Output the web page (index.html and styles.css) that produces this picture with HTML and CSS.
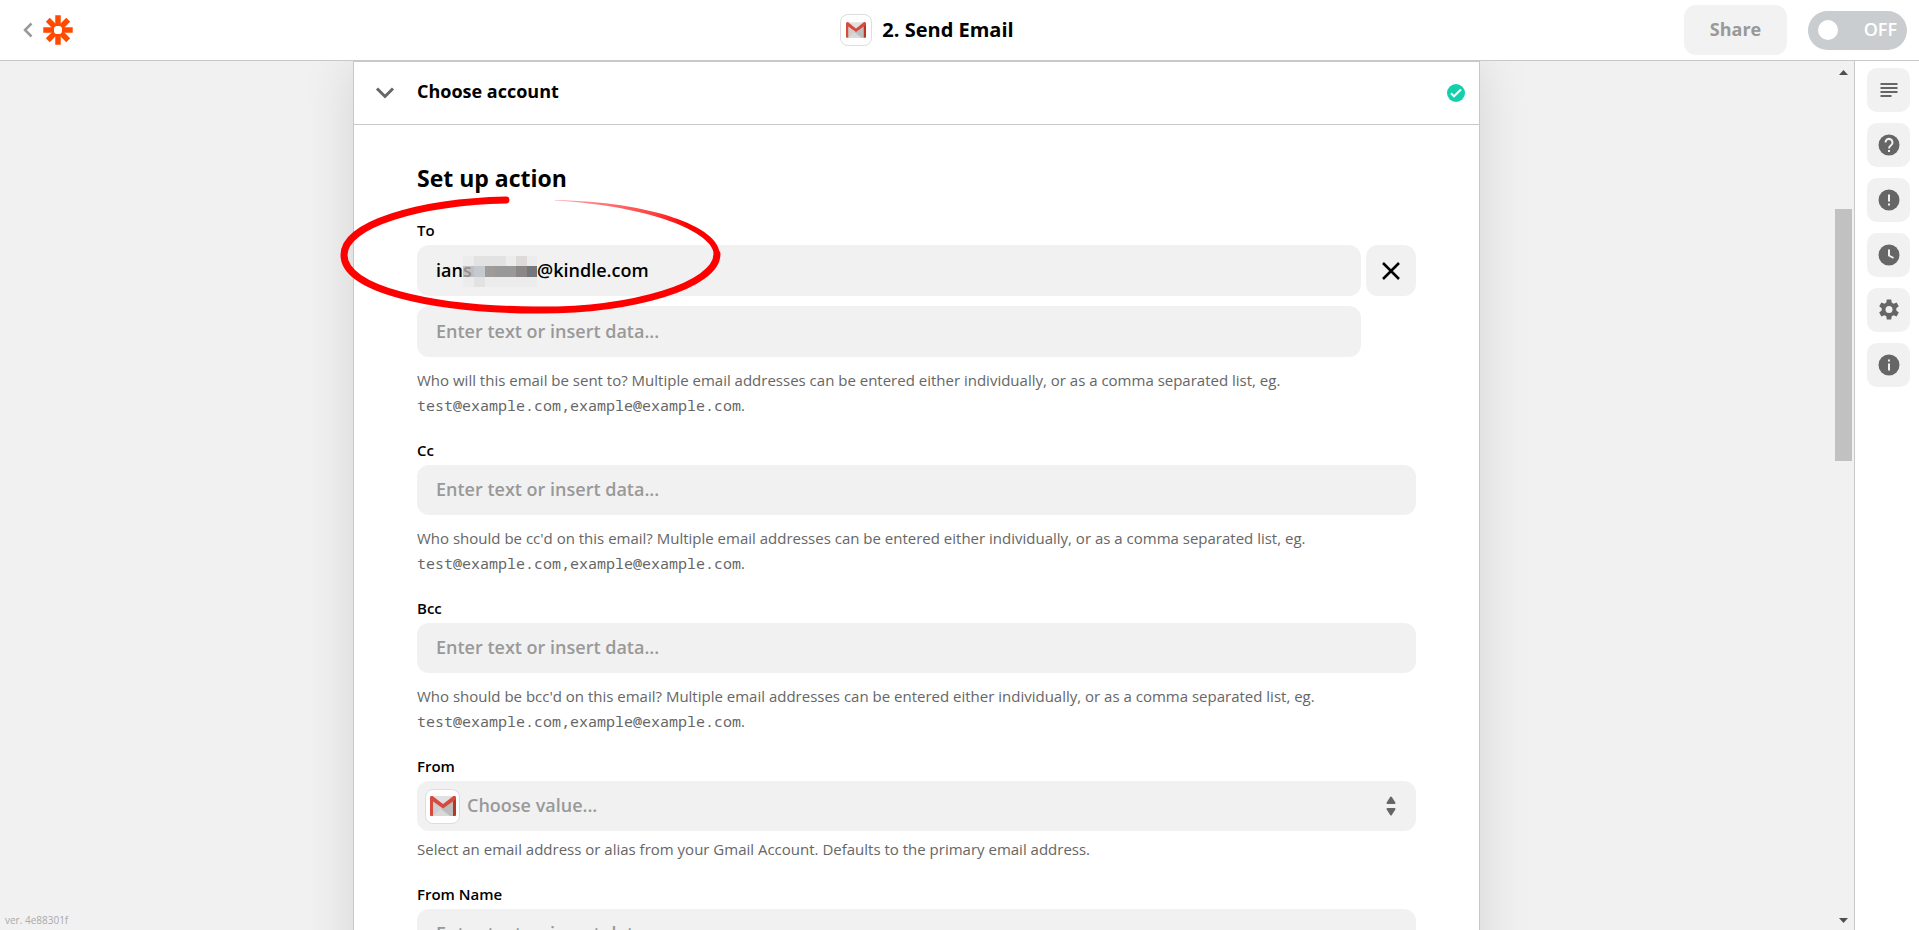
FILE: index.html
```html
<!DOCTYPE html>
<html lang="en">
<head>
  <meta charset="UTF-8">
  <meta name="viewport" content="width=device-width, initial-scale=1.0">
  <title>Send Email</title>
  <link rel="stylesheet" href="styles.css">
</head>
<body>
  <!-- shared icon shapes -->
  <svg class="sprite" aria-hidden="true">
    <symbol id="gmail" viewBox="0 0 26 20">
      <path fill="#e1e1e1" d="M2 0h22v20H2z"/>
      <path fill="#cfcfcf" d="M3 3l10 9L3 20z"/>
      <path fill="#d9d9d9" d="M3 20l10-9 8 9z"/>
      <path fill="#bdbdbd" d="M23 4l-10 8-2 1 9 7h3z"/>
      <path fill="#d54b3d" d="M0 2a2 2 0 0 1 2-2h1v20H1a1 1 0 0 1-1-1z"/>
      <path fill="#b63524" d="M26 2a2 2 0 0 0-2-2h-1v20h2a1 1 0 0 0 1-1z"/>
      <path fill="#d54b3d" d="M0 2C0 0 2-.5 3.200.4L13 8 22.800.4C24-.5 26 0 26 2c0 1-.4 1.600-1 2L13 12.500 1 4C.4 3.600 0 3 0 2z"/>
    </symbol>
  </svg>

  <header class="topbar">
    <div class="topbar-left">
      <a href="#" class="back" aria-label="Back">
        <svg width="10" height="16" viewBox="0 0 10 16"><path d="M8.500 1.500L2 8l6.500 6.500" fill="none" stroke="#999" stroke-width="2.500"/></svg>
      </a>
      <a href="#" class="logo" aria-label="Zapier">
        <svg width="30" height="30" viewBox="-15 -15 30 30">
          <g stroke="#ff4a00" stroke-width="5.500" stroke-linecap="butt">
            <path d="M0-14.700V-4M0 4v10.700M-14.700 0H-4M4 0h10.700"/>
            <path d="M-10.200-10.200L-3-3M10.200 10.200L3 3M-10.200 10.200L-3 3M10.200-10.200L3-3"/>
          </g>
          <rect x="-3.500" y="-3.500" width="7" height="7" rx="1.500" fill="#fff"/>
        </svg>
      </a>
    </div>
    <div class="topbar-title">
      <span class="app-icon"><svg width="20" height="16"><use href="#gmail"/></svg></span>
      <h1>2. Send Email</h1>
    </div>
    <div class="topbar-actions">
      <button type="button" class="share">Share</button>
      <label class="toggle">
        <input type="checkbox" aria-label="Turn on Zap">
        <span>OFF</span>
      </label>
    </div>
  </header>

  <div class="workspace">
    <main class="canvas">
      <section class="card">
        <button type="button" class="step">
          <svg width="20" height="14" viewBox="0 0 20 14"><path d="M2 2.500l8 8 8-8" fill="none" stroke="#666" stroke-width="3"/></svg>
          <span>Choose account</span>
          <svg class="check" width="18" height="18" viewBox="0 0 18 18"><circle cx="9" cy="9" r="9" fill="#13d0ac"/><path d="M4 9.300l3 3L14 5.500" fill="none" stroke="#fff" stroke-width="2"/></svg>
        </button>

        <form class="form">
          <h2>Set up action</h2>

          <div class="field field-to">
            <label for="to">To</label>
            <div class="multi">
              <div class="entry">
                <input type="text" id="to" value="ians&nbsp;&nbsp;&nbsp;&nbsp;&nbsp;&nbsp;&nbsp;&nbsp;&nbsp;&nbsp;&nbsp;&nbsp;&nbsp;&nbsp;@kindle.com">
                <svg class="mosaic" width="74" height="31" viewBox="0 0 74 31" shape-rendering="crispEdges">
                  <path fill="#ececec" d="M0 0h74v10H0zM0 21h74v10H0z"/>
                  <path fill="#e2e2e2" d="M11 0h11v10H11zM22 0h21v10H22zM11 21h11v10H11z"/>
                  <path fill="#dedada" d="M53 0h11v10H53z"/>
                  <path fill="#b5b3b3" fill-opacity=".8" d="M0 10h11v11H0z"/>
                  <path fill="#c5c9d1" d="M11 10h11v11H11z"/>
                  <path fill="#a09a98" d="M22 10h10v11H22z"/>
                  <path fill="#999" d="M32 10h21v11H32z"/>
                  <path fill="#8b8786" d="M53 10h11v11H53z"/>
                  <path fill="#75787b" d="M64 10h10v11H64z"/>
                </svg>
              </div>
              <button type="button" class="remove" aria-label="Remove">
                <svg width="18" height="18" viewBox="0 0 18 18"><path d="M1 1l16 16M17 1L1 17" stroke="#000" stroke-width="2.500"/></svg>
              </button>
              <input type="text" aria-label="Another recipient" placeholder="Enter text or insert data...">
            </div>
            <p>Who will this email be sent to? Multiple email addresses can be entered either individually, or as a comma separated list, eg. <code>test@example.com,example@example.com</code>.</p>
            <svg class="circle-mark" width="390" height="126" viewBox="0 0 390 126" aria-hidden="true">
              <defs>
                <linearGradient id="fade" x1="0" x2="1"><stop offset="0" stop-color="#f00" stop-opacity=".35"/><stop offset=".6" stop-color="#f00" stop-opacity=".75"/><stop offset=".8" stop-color="#f00"/></linearGradient>
              </defs>
              <path d="M166 10C80 12 4 34 4 65C4 99 90 119 194 120C294 121 377 95 377 64" fill="none" stroke="#f00" stroke-width="7" stroke-linecap="round"/>
              <path d="M374 65C374 42 310 16 215 10.500V10C310 12 380 36 380 65z" fill="url(#fade)"/>
            </svg>
          </div>

          <div class="field">
            <label for="cc">Cc</label>
            <input type="text" id="cc" placeholder="Enter text or insert data...">
            <p>Who should be cc'd on this email? Multiple email addresses can be entered either individually, or as a comma separated list, eg. <code>test@example.com,example@example.com</code>.</p>
          </div>

          <div class="field">
            <label for="bcc">Bcc</label>
            <input type="text" id="bcc" placeholder="Enter text or insert data...">
            <p>Who should be bcc'd on this email? Multiple email addresses can be entered either individually, or as a comma separated list, eg. <code>test@example.com,example@example.com</code>.</p>
          </div>

          <div class="field field-from">
            <label for="from">From</label>
            <div class="select">
              <span class="app-icon"><svg width="26" height="20"><use href="#gmail"/></svg></span>
              <select id="from"><option>Choose value...</option></select>
              <svg width="10" height="20" viewBox="0 0 10 20"><path d="M5 1.500l3.500 5.500h-7zM5 18.500L1.500 13h7z" fill="#666" stroke="#666" stroke-width="2" stroke-linejoin="round"/></svg>
            </div>
            <p>Select an email address or alias from your Gmail Account. Defaults to the primary email address.</p>
          </div>

          <div class="field">
            <label for="fromName">From Name</label>
            <input type="text" id="fromName" placeholder="Enter text or insert data...">
          </div>
        </form>
      </section>
      <div class="version">ver. 4e88301f</div>
    </main>

    <div class="scrollbar" aria-hidden="true">
      <svg width="9" height="5" viewBox="0 0 9 5"><path d="M0 5L4.500 0 9 5z" fill="#505050"/></svg>
      <div class="track"><div class="thumb"></div></div>
      <svg width="9" height="5" viewBox="0 0 9 5"><path d="M0 0h9L4.500 5z" fill="#505050"/></svg>
    </div>

    <nav class="sidebar">
      <button type="button" aria-label="Outline"><svg viewBox="0 0 24 24"><path d="M3.500 5h17v2h-17zM3.500 9h17v2h-17zM3.500 13h17v2h-17zM3.500 17h11v2h-11z"/></svg></button>
      <button type="button" aria-label="Help"><svg viewBox="0 0 24 24"><circle cx="12" cy="12" r="10.500"/><path class="line" d="M8.500 9.500a3.500 3.500 0 1 1 5.600 2.700c-1.200.9-2.100 1.500-2.100 3.300"/><path class="cut" d="M11 17h2v2h-2z"/></svg></button>
      <button type="button" aria-label="Alerts"><svg viewBox="0 0 24 24"><circle cx="12" cy="12" r="10.500"/><path class="cut" d="M11 6.500h2v7h-2zM11 15.500h2v2h-2z"/></svg></button>
      <button type="button" aria-label="History"><svg viewBox="0 0 24 24"><circle cx="12" cy="12" r="10.500"/><path class="line" d="M12 6.500v6l4.500 2.500"/></svg></button>
      <button type="button" aria-label="Settings"><svg viewBox="0 0 24 24"><path d="M9.800 1.500h4.400l.5 3.100 1.900 1.100 3-1.200 2.200 3.800-2.500 2v2.300l2.500 2-2.200 3.800-3-1.200-1.900 1.100-.5 3.200H9.800l-.5-3.200-1.900-1.100-3 1.200-2.200-3.800 2.500-2v-2.300l-2.500-2 2.200-3.800 3 1.200 1.900-1.100z"/><circle class="cut" cx="12" cy="11.500" r="3.500"/></svg></button>
      <button type="button" aria-label="Info"><svg viewBox="0 0 24 24"><circle cx="12" cy="12" r="10.500"/><path class="cut" d="M11 6.500h2v2h-2zM11 10.500h2v7h-2z"/></svg></button>
    </nav>
  </div>
</body>
</html>
```

FILE: styles.css
```css
* {
  box-sizing: border-box;
}
body {
  margin: 0;
  height: 100vh;
  display: flex;
  flex-direction: column;
  overflow: hidden;
  font-family: 'Open Sans', sans-serif;
  color: #000;
  background: #fff;
}
h1, h2, p {
  margin: 0;
}
button, input, select {
  font-family: inherit;
  border: none;
  cursor: pointer;
}
svg {
  display: block;
  flex: none;
}
.sprite {
  position: absolute;
  width: 0;
  height: 0;
}

/* Top bar */
.topbar {
  flex: none;
  display: grid;
  grid-template-columns: 1fr auto 1fr 65px;
  align-items: center;
  height: 61px;
  border-bottom: 1px solid #c8c8c8;
}
.topbar-left {
  display: flex;
  align-items: center;
  gap: 10px;
  padding-left: 23px;
}
.topbar-title {
  display: flex;
  align-items: center;
  gap: 10px;
}
.topbar-title h1 {
  font-size: 20px;
  line-height: 28px;
}
.app-icon {
  display: flex;
  align-items: center;
  justify-content: center;
  width: 32px;
  height: 32px;
  border: 1px solid #ddd;
  border-radius: 8px;
  background: #fff;
}
.topbar-actions {
  grid-column: 3 / 5;
  display: flex;
  align-items: center;
  justify-content: flex-end;
  gap: 21px;
  padding-right: 12px;
}
.share {
  width: 103px;
  height: 50px;
  padding: 0 0 2px;
  border-radius: 12px;
  background: #f2f2f2;
  color: #999;
  font-size: 18px;
  font-weight: 700;
}
.toggle {
  display: flex;
  align-items: center;
  justify-content: space-between;
  width: 99px;
  height: 39px;
  padding: 0 10px;
  border-radius: 20px;
  background: #c9cdd0;
  color: #fff;
  font-size: 18px;
  font-weight: 600;
}
.toggle span {
  padding-bottom: 2px;
  line-height: 20px;
}
.toggle input {
  appearance: none;
  width: 20px;
  height: 20px;
  margin: 0;
  border-radius: 50%;
  background: #fff;
}

/* Workspace */
.workspace {
  flex: 1;
  min-height: 0;
  display: flex;
  background: #f1f1f1;
}
.canvas {
  position: relative;
  flex: 1;
  overflow: hidden;
}
.card {
  max-width: 1127px;
  margin: 0 auto;
  background: #fff;
  border: 1px solid #c8c8c8;
  box-shadow: 0 0 50px rgba(0, 0, 0, 0.12);
}
.step {
  display: flex;
  align-items: center;
  width: 100%;
  height: 63px;
  padding: 0 14px 0 21px;
  gap: 22px;
  border-bottom: 1px solid #c8c8c8;
  background: #fff;
  text-align: left;
  font-size: 18px;
  font-weight: 700;
}
.step span {
  padding-bottom: 4px;
}
.step .check {
  margin-left: auto;
}
.version {
  position: absolute;
  left: 5px;
  bottom: 3px;
  font-size: 10px;
  color: #aaa;
}

/* Form */
.form {
  padding: 37px 63px;
}
.form h2 {
  margin-bottom: 25px;
  font-size: 23px;
  line-height: 33px;
}
.field {
  margin-bottom: 22px;
}
.field label {
  display: block;
  margin-bottom: 5px;
  font-size: 15px;
  font-weight: 600;
  line-height: 20px;
}
.field input {
  display: block;
  width: 100%;
  height: 50px;
  padding: 0 19px 2px;
  border-radius: 12px;
  background: #f1f1f1;
  color: #000;
  font-size: 18px;
  font-weight: 600;
}
.field input::placeholder {
  color: #999;
  opacity: 1;
}
.field p {
  margin-top: 11px;
  color: #666;
  font-size: 15px;
  line-height: 25px;
}
.field code {
  font-family: 'Noto Sans Mono', 'DejaVu Sans Mono', monospace;
  font-size: 15px;
  line-height: 20px;
}
.field-to {
  position: relative;
}
.multi {
  display: grid;
  grid-template-columns: 1fr 50px;
  gap: 10px 5px;
}
.multi input,
.remove {
  height: 51px;
}
.entry {
  position: relative;
}
.mosaic {
  position: absolute;
  left: 46px;
  top: 11px;
}
.remove {
  display: flex;
  align-items: center;
  justify-content: center;
  border-radius: 12px;
  background: #f1f1f1;
}
.circle-mark {
  position: absolute;
  left: -77px;
  top: -30px;
  pointer-events: none;
}
.select {
  display: flex;
  align-items: center;
  gap: 7px;
  height: 50px;
  padding: 0 20px 0 8px;
  border-radius: 12px;
  background: #f1f1f1;
}
.select .app-icon {
  width: 35px;
  height: 35px;
}
.select select {
  appearance: none;
  flex: 1;
  padding-bottom: 2px;
  background: none;
  color: #999;
  font-size: 18px;
  font-weight: 600;
}
.field-from p {
  margin-top: 6px;
}

/* Scrollbar */
.scrollbar {
  display: flex;
  flex-direction: column;
  align-items: center;
  width: 21px;
  padding: 9px 2px 7px;
  background: #f1f1f1;
}
.track {
  flex: 1;
  width: 17px;
  padding-top: 134px;
}
.thumb {
  height: 252px;
  background: #c1c1c1;
}

/* Sidebar */
.sidebar {
  display: flex;
  flex-direction: column;
  gap: 11px;
  padding: 7px 9px 0 12px;
  border-left: 1px solid #c8c8c8;
  background: #fff;
}
.sidebar button {
  display: flex;
  align-items: center;
  justify-content: center;
  width: 43px;
  height: 44px;
  padding: 0;
  border-radius: 10px;
  background: #f1f1f1;
}
.sidebar svg {
  width: 24px;
  height: 24px;
  fill: #666;
}
.sidebar .cut {
  fill: #f1f1f1;
}
.sidebar .line {
  fill: none;
  stroke: #f1f1f1;
  stroke-width: 2;
}
```
